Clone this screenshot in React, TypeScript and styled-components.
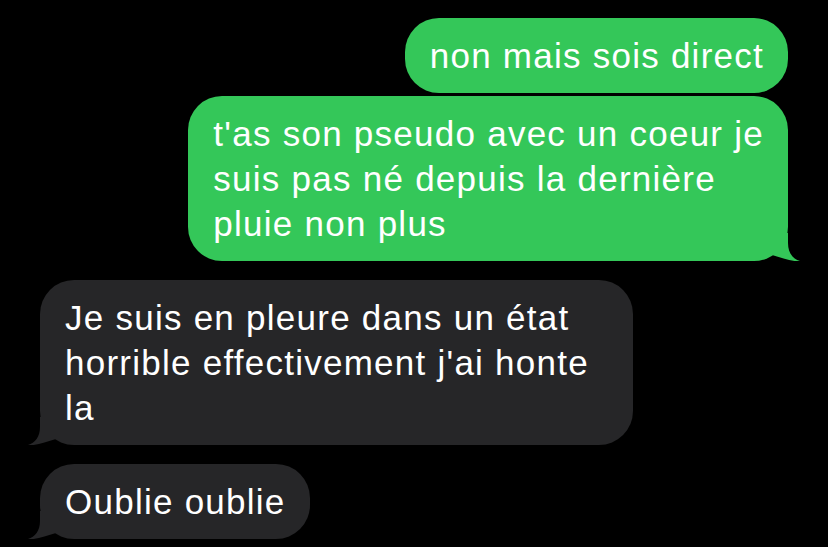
import styled, { createGlobalStyle } from "styled-components";

const GlobalStyle = createGlobalStyle`
  html, body {
    margin: 0;
    padding: 0;
    background: #000;
  }
`;

const Thread = styled.div`
  display: flex;
  flex-direction: column;
  gap: 19px;
  padding: 18px 40px 0 40px;
  width: 828px;
  height: 547px;
  box-sizing: border-box;
  background: #000;
  overflow: hidden;
  font-family: "Liberation Sans", Arial, sans-serif;
`;

const Group = styled.div<{ $sent?: boolean }>`
  display: flex;
  flex-direction: column;
  gap: 3px;
  align-items: ${(p) => (p.$sent ? "flex-end" : "flex-start")};
`;

const Bubble = styled.div<{ $sent?: boolean; $padRight?: number }>`
  position: relative;
  padding: 15px ${(p) => p.$padRight ?? 24}px 15px 25px;
  border-radius: 34px;
  background: ${(p) => (p.$sent ? "#34c759" : "#262628")};
  color: #fff;
  font-size: 35px;
  line-height: 45px;
  letter-spacing: 1.25px;
  white-space: pre-line;
`;

const Tail = styled.svg<{ $sent?: boolean }>`
  position: absolute;
  bottom: 0;
  width: 28px;
  height: 28px;
  ${(p) =>
    p.$sent
      ? "right: -12px;"
      : "left: -12px; transform: scaleX(-1);"}
`;

function BubbleTail({ sent, color }: { sent?: boolean; color: string }) {
  return (
    <Tail $sent={sent} viewBox="0 0 28 28">
      <path d="M0 0 H16 V10 C16 20 21 26 28 28 C20 29 10 25 0 22 Z" fill={color} />
    </Tail>
  );
}

function Message({
  text,
  sent,
  tail,
  padRight,
}: {
  text: string;
  sent?: boolean;
  tail?: boolean;
  padRight?: number;
}) {
  const color = sent ? "#34c759" : "#262628";
  return (
    <Bubble $sent={sent} $padRight={padRight}>
      {text}
      {tail && <BubbleTail sent={sent} color={color} />}
    </Bubble>
  );
}

export default function App() {
  return (
    <>
      <GlobalStyle />
      <Thread>
        <Group $sent>
          <Message sent text="non mais sois direct" />
          <Message
            sent
            tail
            text={"t'as son pseudo avec un coeur je\nsuis pas né depuis la dernière\npluie non plus"}
          />
        </Group>
        <Group>
          <Message
            tail
            padRight={44}
            text={"Je suis en pleure dans un état\nhorrible effectivement j'ai honte\nla"}
          />
        </Group>
        <Group>
          <Message tail text="Oublie oublie" />
        </Group>
      </Thread>
    </>
  );
}
